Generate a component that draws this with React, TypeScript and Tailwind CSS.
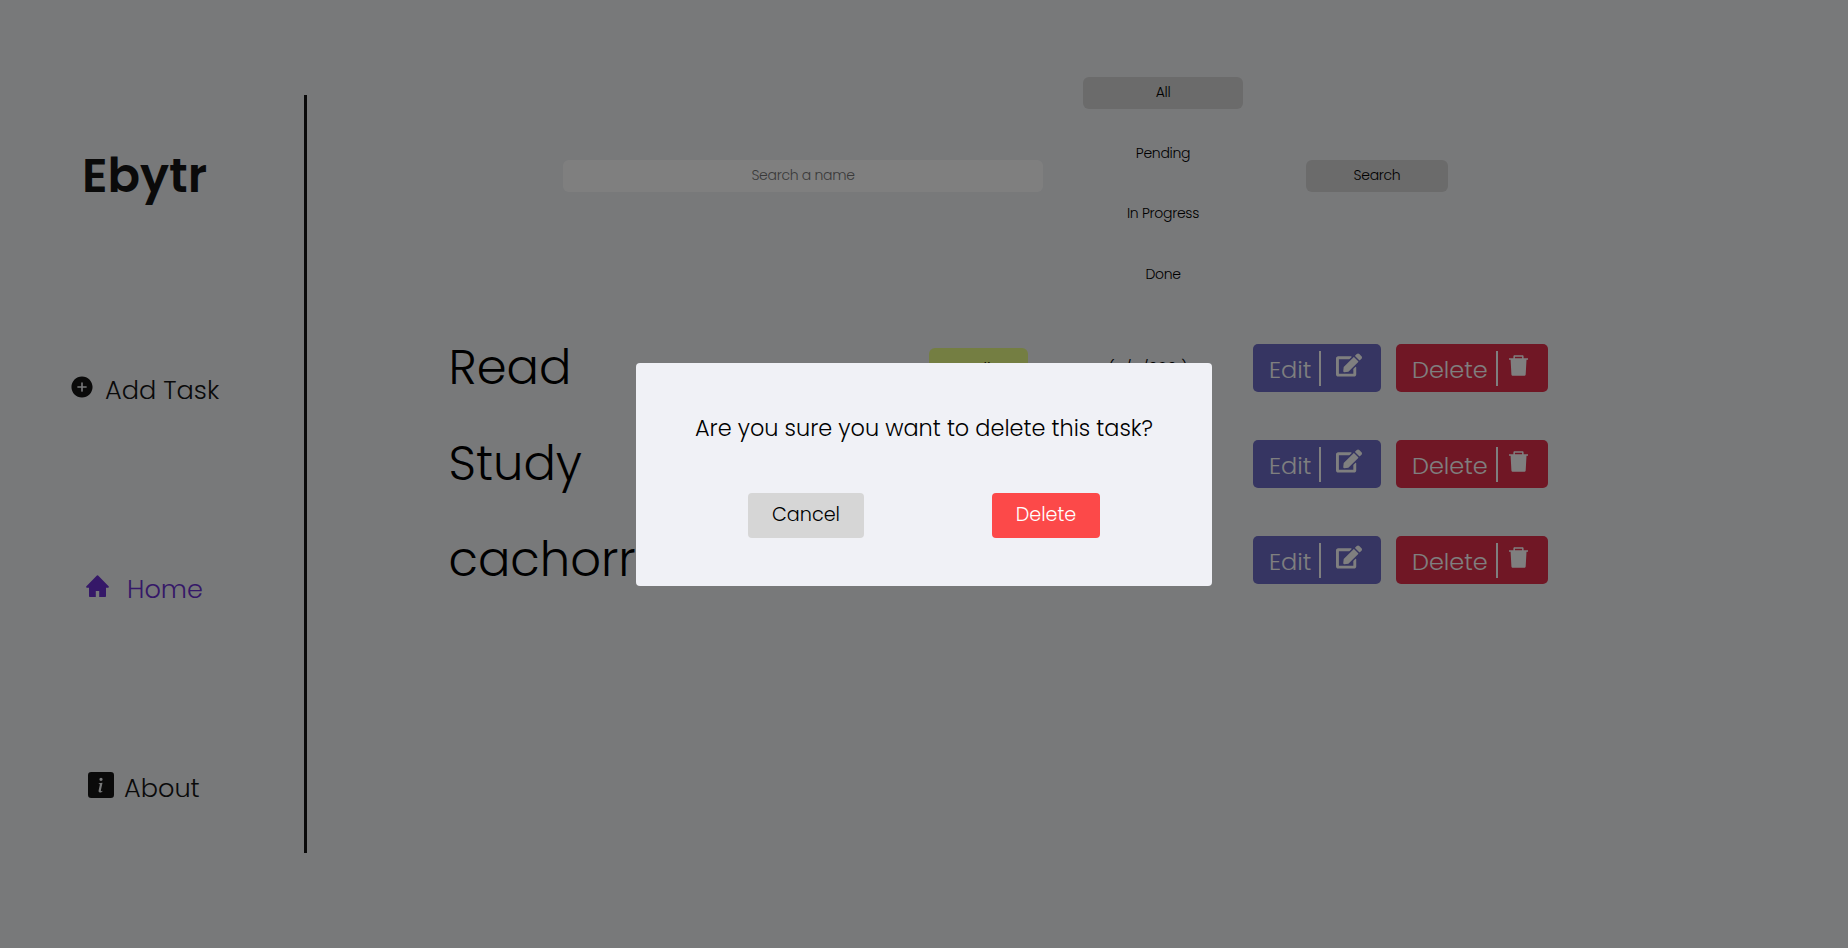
import React from "react";
import { FaEdit } from "react-icons/fa";
import { IoAddCircle } from "react-icons/io5";
import { BsInfoSquareFill } from "react-icons/bs";

type Task = { name: string; status: string; statusClass: string; date: string };

const tasks: Task[] = [
  { name: "Read", status: "pending", statusClass: "bg-[#e8fc84]", date: "(4/4/2021)" },
  { name: "Study", status: "pending", statusClass: "bg-[#e8fc84]", date: "(4/4/2021)" },
  { name: "cachorro", status: "pending", statusClass: "bg-[#e8fc84]", date: "(4/4/2021)" },
];

const filters = ["All", "Pending", "In Progress", "Done"];

function HomeIcon() {
  return (
    <svg className="h-[22px] w-[23px] shrink-0" viewBox="0 0 23 22" fill="currentColor">
      <path d="M10.9.5a.9.9 0 0 1 1.2 0L22.6 11.2c.5.6.3 1.5-.6 1.5H20V21.2a.8.8 0 0 1-.8.8H13.2V16H9.8V22H3.8a.8.8 0 0 1-.8-.8V12.7H1c-.9 0-1.1-.9-.6-1.5Z" />
    </svg>
  );
}

function TrashIcon() {
  return (
    <svg className="h-[21px] w-[19px] shrink-0" viewBox="0 0 19 21" fill="currentColor">
      <path d="M5.6.2h7.8c.7 0 1.2.5 1.2 1.2v1.9H19v1.5h-1.5l-.8 14.4c0 .9-.8 1.6-1.7 1.6H4.1c-.9 0-1.7-.7-1.7-1.6L1.6 4.8H0V3.3h4.4V1.4C4.4.7 4.9.2 5.6.2Zm.3 1.5v1.6h7.2V1.7Z" />
    </svg>
  );
}

function Sidebar() {
  return (
    <nav className="mt-[95px] flex h-[758px] w-[307px] shrink-0 flex-col border-r-[3px] border-[#141414] pt-[45px] text-[25.6px] leading-none text-[#141414]">
      <h1 className="flex h-[72px] items-center pl-[82px] text-[48px] font-semibold">Ebytr</h1>
      <a className="mt-[143px] flex h-[72px] items-center pl-[69px]">
        <IoAddCircle className="-mt-2 mr-[10px] size-[26px] shrink-0" />
        Add Task
      </a>
      <a className="mt-[127px] flex h-[72px] items-center pl-[86px] text-[#6a30d0]">
        <span className="-mt-[9px] mr-[18px]"><HomeIcon /></span>
        Home
      </a>
      <a className="mt-[127px] flex h-[72px] items-center pl-[88px]">
        <BsInfoSquareFill className="-mt-[9px] mr-[10px] size-[26px] shrink-0" />
        About
      </a>
    </nav>
  );
}

function SearchBar() {
  return (
    <form className="flex h-[213px] items-start pl-[256px] text-[14px] leading-none tracking-[-0.3px]">
      <input
        className="mt-[83px] h-8 w-[480px] rounded-md bg-white pb-px text-center placeholder:text-[#757575]"
        placeholder="Search a name"
      />
      <div className="ml-10 flex w-40 flex-col gap-[28.4px]">
        {filters.map((f, i) => (
          <button
            key={f}
            type="button"
            className={i === 0 ? "h-8 rounded-md bg-[#d6d6d6] pb-[2px]" : "h-8 rounded-md pb-px"}
          >
            {f}
          </button>
        ))}
      </div>
      <button type="button" className="ml-[63px] mt-[83px] h-8 w-[142px] rounded-md bg-[#d6d6d6] pb-[2px]">
        Search
      </button>
    </form>
  );
}

function TaskRow({ task }: { task: Task }) {
  return (
    <li className="flex h-12 items-center">
      <span className="-mt-px w-[481px] pl-[0.5px] text-[48px] leading-none">{task.name}</span>
      <span className={`flex h-10 w-[99px] items-center justify-center rounded-md pt-px text-[16px] ${task.statusClass}`}>
        {task.status}
      </span>
      <span className="w-[225px] pl-[15px] pt-[2px] text-center text-[16px]">{task.date}</span>
      <button className="flex h-12 w-32 items-center rounded-[5px] bg-[#6c6ac4] pl-4 text-[24px] leading-none text-white">
        <span className="mt-[3px] w-[50px] text-left">Edit</span>
        <span className="h-[35px] w-[2px] bg-white" />
        <FaEdit className="-mt-[6px] ml-[15px] size-[26px]" />
      </button>
      <button className="ml-[15px] flex h-12 w-[152px] items-center rounded-[5px] bg-[#e02e4a] pl-4 text-[24px] leading-none text-white">
        <span className="mt-[3px] w-[84px] text-left">Delete</span>
        <span className="h-[35px] w-[2px] bg-white" />
        <span className="-mt-[6px] ml-[11px]"><TrashIcon /></span>
      </button>
    </li>
  );
}

function ConfirmDialog() {
  return (
    <div className="fixed inset-0 flex items-center justify-center bg-black/50">
      <div role="dialog" className="flex h-[223px] w-[576px] flex-col rounded bg-[#f0f1f6] px-12 pb-12 pt-[47px]">
        <p className="text-center text-[22.4px] leading-9 whitespace-nowrap">Are you sure you want to delete this task?</p>
        <div className="mt-[47px] flex justify-around text-[19.2px] leading-none">
          <button className="h-[45px] w-[116px] rounded bg-[#d6d6d6]">Cancel</button>
          <button className="h-[45px] w-[108px] rounded bg-[#fc4949] text-white">Delete</button>
        </div>
      </div>
    </div>
  );
}

export default function App() {
  return (
    <div className="flex h-[948px] w-full overflow-hidden bg-[#f0f2f5] font-['Poppins','Inter',sans-serif] font-light text-black">
      <Sidebar />
      <main className="flex flex-1 flex-col pt-[77px]">
        <SearchBar />
        <ul className="mt-[54px] flex flex-col gap-12 pl-[141px]">
          {tasks.map((t) => (
            <TaskRow key={t.name} task={t} />
          ))}
        </ul>
      </main>
      <ConfirmDialog />
    </div>
  );
}
